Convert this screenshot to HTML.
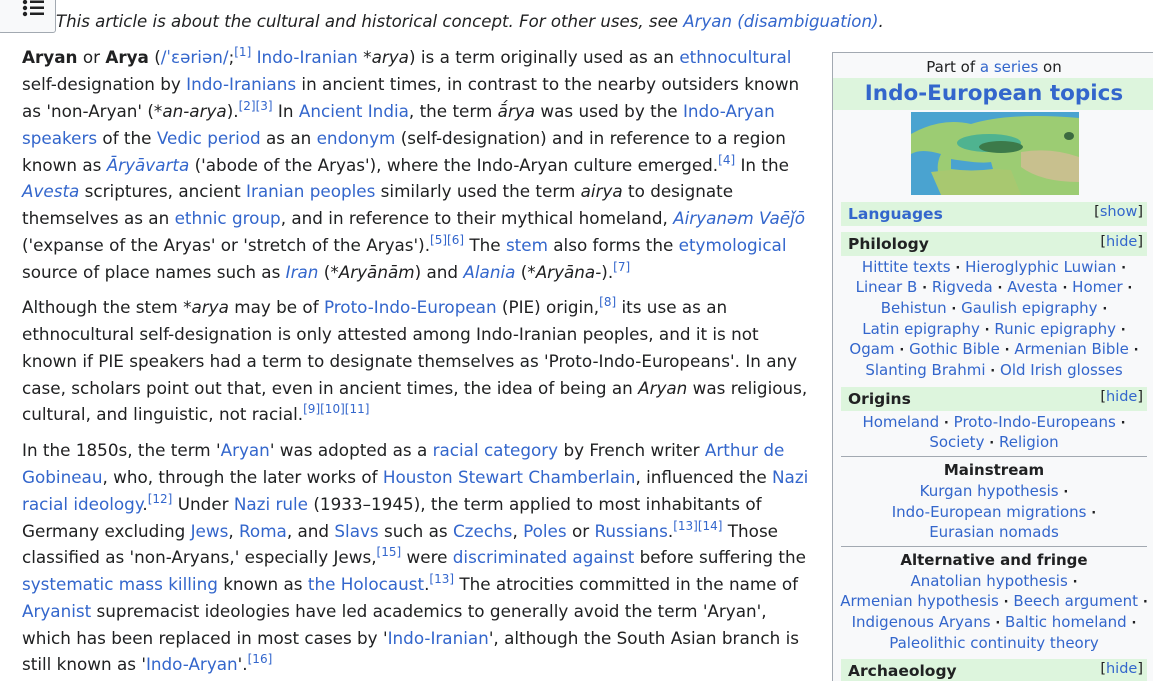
<!DOCTYPE html>
<html style="overflow:hidden;height:681px"><head><meta charset="utf-8"><style>
body{margin:0;width:1153px;height:681px;overflow:hidden;background:#fff;font-family:"DejaVu Sans","Liberation Sans",sans-serif;color:#202122;position:relative}
a{color:#3366cc;text-decoration:none}
.l{position:absolute;left:22px;white-space:nowrap;font-size:16.8px;line-height:26px}
sup{font-size:12px;line-height:0;vertical-align:7px}
.ib{position:absolute;left:832px;top:52px;width:330px;height:640px;border:1px solid #a2a9b1;background:#f8f9fa;font-size:15px}
.c{position:absolute;left:0;width:322px;text-align:center;white-space:nowrap;line-height:20px}
.c i{font-style:normal;font-weight:bold;color:#202122;font-size:13px}
.h{position:absolute;left:8px;width:306px;height:24px;background:#ddf5dd;font-weight:bold;font-size:15.5px;line-height:24px}
.h span.t{position:absolute;left:7px}
.h span.r{position:absolute;right:4px;font-weight:normal;font-size:14.5px;top:-2px}
.hr{position:absolute;left:8px;width:306px;border-top:1px solid #a2a9b1}
</style></head><body>
<div style="position:absolute;left:-2px;top:-10px;width:56px;height:41px;border:1px solid #a2a9b1;border-radius:3px;background:#f8f9fa"></div>
<svg style="position:absolute;left:22px;top:0" width="24" height="18"><g fill="#202122"><circle cx="3" cy="2" r="2.2"/><circle cx="3" cy="8" r="2.2"/><circle cx="3" cy="14" r="2.2"/><rect x="8" y="0.5" width="14" height="2.5"/><rect x="8" y="6.5" width="14" height="2.5"/><rect x="8" y="12.5" width="14" height="2.5"/></g></svg>
<div class="l" style="left:56px;top:9px;font-style:italic;font-size:16.6px">This article is about the cultural and historical concept. For other uses, see <a>Aryan (disambiguation)</a>.</div>

<div class="l" style="top:44px"><b>Aryan</b> or <b>Arya</b> (<a>/ˈɛəriən/</a>;<sup><a>[1]</a></sup> <a>Indo-Iranian</a> *<i>arya</i>) is a term originally used as an <a>ethnocultural</a></div>
<div class="l" style="top:71px">self-designation by <a>Indo-Iranians</a> in ancient times, in contrast to the nearby outsiders known</div>
<div class="l" style="top:98px">as 'non-Aryan' (*<i>an-arya</i>).<sup><a>[2][3]</a></sup> In <a>Ancient India</a>, the term <i>ā́rya</i> was used by the <a>Indo-Aryan</a></div>
<div class="l" style="top:125px"><a>speakers</a> of the <a>Vedic period</a> as an <a>endonym</a> (self-designation) and in reference to a region</div>
<div class="l" style="top:152px">known as <a><i>Āryāvarta</i></a> ('abode of the Aryas'), where the Indo-Aryan culture emerged.<sup><a>[4]</a></sup> In the</div>
<div class="l" style="top:178px"><a><i>Avesta</i></a> scriptures, ancient <a>Iranian peoples</a> similarly used the term <i>airya</i> to designate</div>
<div class="l" style="top:205px">themselves as an <a>ethnic group</a>, and in reference to their mythical homeland, <a><i>Airyanəm Vaēǰō</i></a></div>
<div class="l" style="top:232px">('expanse of the Aryas' or 'stretch of the Aryas').<sup><a>[5][6]</a></sup> The <a>stem</a> also forms the <a>etymological</a></div>
<div class="l" style="top:259px">source of place names such as <a><i>Iran</i></a> (*<i>Aryānām</i>) and <a><i>Alania</i></a> (*<i>Aryāna-</i>).<sup><a>[7]</a></sup></div>

<div class="l" style="top:294px">Although the stem *<i>arya</i> may be of <a>Proto-Indo-European</a> (PIE) origin,<sup><a>[8]</a></sup> its use as an</div>
<div class="l" style="top:321px">ethnocultural self-designation is only attested among Indo-Iranian peoples, and it is not</div>
<div class="l" style="top:348px">known if PIE speakers had a term to designate themselves as 'Proto-Indo-Europeans'. In any</div>
<div class="l" style="top:375px">case, scholars point out that, even in ancient times, the idea of being an <i>Aryan</i> was religious,</div>
<div class="l" style="top:401px">cultural, and linguistic, not racial.<sup><a>[9][10][11]</a></sup></div>

<div class="l" style="top:437px">In the 1850s, the term '<a>Aryan</a>' was adopted as a <a>racial category</a> by French writer <a>Arthur de</a></div>
<div class="l" style="top:464px"><a>Gobineau</a>, who, through the later works of <a>Houston Stewart Chamberlain</a>, influenced the <a>Nazi</a></div>
<div class="l" style="top:491px"><a>racial ideology</a>.<sup><a>[12]</a></sup> Under <a>Nazi rule</a> (1933–1945), the term applied to most inhabitants of</div>
<div class="l" style="top:518px">Germany excluding <a>Jews</a>, <a>Roma</a>, and <a>Slavs</a> such as <a>Czechs</a>, <a>Poles</a> or <a>Russians</a>.<sup><a>[13][14]</a></sup> Those</div>
<div class="l" style="top:544px">classified as 'non-Aryans,' especially Jews,<sup><a>[15]</a></sup> were <a>discriminated against</a> before suffering the</div>
<div class="l" style="top:571px"><a>systematic mass killing</a> known as <a>the Holocaust</a>.<sup><a>[13]</a></sup> The atrocities committed in the name of</div>
<div class="l" style="top:598px"><a>Aryanist</a> supremacist ideologies have led academics to generally avoid the term 'Aryan',</div>
<div class="l" style="top:625px">which has been replaced in most cases by '<a>Indo-Iranian</a>', although the South Asian branch is</div>
<div class="l" style="top:651px">still known as '<a>Indo-Aryan</a>'.<sup><a>[16]</a></sup></div>

<div class="ib">
<div class="c" style="top:4px">Part of <a>a series</a> on</div>
<div style="position:absolute;left:0;top:25px;width:322px;height:32px;background:#ddf5dd;text-align:center;font-weight:bold;font-size:21.5px;line-height:32px;color:#3366cc">Indo-European topics</div>
<svg style="position:absolute;left:78px;top:59px" width="168" height="83"><rect width="168" height="83" fill="#4aa3d0"/><path d="M0 22 Q30 5 60 12 Q100 0 168 6 L168 83 L40 83 Q20 62 30 42 Q10 36 0 42Z" fill="#9ccc73"/><path d="M20 60 Q60 55 100 58 L110 83 L30 83Z" fill="#a8c870"/><path d="M110 40 Q140 35 168 45 L168 70 Q130 70 110 55Z" fill="#c8c08e"/><ellipse cx="78" cy="31" rx="32" ry="9" fill="#4fb390"/><ellipse cx="90" cy="35" rx="22" ry="6" fill="#3c7a4a"/><ellipse cx="158" cy="24" rx="5" ry="4" fill="#3c6a40"/><path d="M40 47 Q70 52 80 50 L82 57 Q60 60 40 57Z" fill="#4aa3d0"/></svg>
<div class="h" style="top:149px;color:#3366cc"><span class="t">Languages</span><span class="r" style="color:#202122">[<a>show</a>]</span></div>
<div class="h" style="top:179px"><span class="t">Philology</span><span class="r">[<a>hide</a>]</span></div>
<div class="c" style="top:204px"><a>Hittite texts</a> <i>·</i> <a>Hieroglyphic Luwian</a> <i>·</i></div>
<div class="c" style="top:224px"><a>Linear B</a> <i>·</i> <a>Rigveda</a> <i>·</i> <a>Avesta</a> <i>·</i> <a>Homer</a> <i>·</i></div>
<div class="c" style="top:245px"><a>Behistun</a> <i>·</i> <a>Gaulish epigraphy</a> <i>·</i></div>
<div class="c" style="top:266px"><a>Latin epigraphy</a> <i>·</i> <a>Runic epigraphy</a> <i>·</i></div>
<div class="c" style="top:286px"><a>Ogam</a> <i>·</i> <a>Gothic Bible</a> <i>·</i> <a>Armenian Bible</a> <i>·</i></div>
<div class="c" style="top:307px"><a>Slanting Brahmi</a> <i>·</i> <a>Old Irish glosses</a></div>
<div class="h" style="top:334px"><span class="t">Origins</span><span class="r">[<a>hide</a>]</span></div>
<div class="c" style="top:359px"><a>Homeland</a> <i>·</i> <a>Proto-Indo-Europeans</a> <i>·</i></div>
<div class="c" style="top:379px"><a>Society</a> <i>·</i> <a>Religion</a></div>
<div class="hr" style="top:403px"></div>
<div class="c" style="top:407px;font-weight:bold">Mainstream</div>
<div class="c" style="top:428px"><a>Kurgan hypothesis</a> <i>·</i></div>
<div class="c" style="top:449px"><a>Indo-European migrations</a> <i>·</i></div>
<div class="c" style="top:469px"><a>Eurasian nomads</a></div>
<div class="hr" style="top:493px"></div>
<div class="c" style="top:497px;font-weight:bold">Alternative and fringe</div>
<div class="c" style="top:518px"><a>Anatolian hypothesis</a> <i>·</i></div>
<div class="c" style="top:538px"><a>Armenian hypothesis</a> <i>·</i> <a>Beech argument</a> <i>·</i></div>
<div class="c" style="top:559px"><a>Indigenous Aryans</a> <i>·</i> <a>Baltic homeland</a> <i>·</i></div>
<div class="c" style="top:580px"><a>Paleolithic continuity theory</a></div>
<div class="h" style="top:606px"><span class="t">Archaeology</span><span class="r">[<a>hide</a>]</span></div>
</div>
</body></html>
